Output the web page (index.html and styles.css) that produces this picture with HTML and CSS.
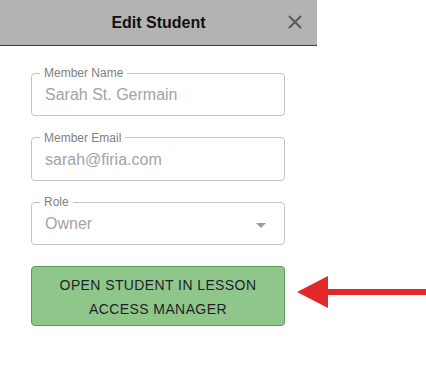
FILE: index.html
```html
<!DOCTYPE html>
<html>
<head>
<meta charset="utf-8">
<link rel="stylesheet" href="styles.css">
</head>
<body>
<div class="panel">
  <div class="header">
    <span class="title">Edit Student</span>
    <span class="close" aria-label="close">
      <svg width="14" height="14" viewBox="0 0 14 14"><path d="M1 1L13 13M13 1L1 13" stroke="#5a5a5a" stroke-width="2" fill="none"/></svg>
    </span>
  </div>
  <div class="content">
    <fieldset class="field">
      <legend>Member Name</legend>
      <div class="value">Sarah St. Germain</div>
    </fieldset>
    <fieldset class="field">
      <legend>Member Email</legend>
      <div class="value">sarah@firia.com</div>
    </fieldset>
    <fieldset class="field">
      <legend>Role</legend>
      <div class="value select">Owner<span class="caret"></span></div>
    </fieldset>
    <button class="open-btn">OPEN STUDENT IN LESSON<br>ACCESS MANAGER</button>
  </div>
</div>
<svg class="arrow" width="131" height="34" viewBox="0 0 131 34">
  <polygon points="2,17 33,1 33,33" fill="#e3282b"/>
  <rect x="32" y="14" width="99" height="6" fill="#e3282b"/>
</svg>
</body>
</html>
```
FILE: styles.css
```css
html, body {
  margin: 0;
  padding: 0;
  background: #fff;
  font-family: "Liberation Sans", Arial, sans-serif;
}
.panel {
  width: 317px;
}
.header {
  height: 45px;
  background: #b3b3b3;
  border-bottom: 1px solid #3c3c3c;
  display: flex;
  align-items: center;
  justify-content: center;
  position: relative;
}
.title {
  font-weight: bold;
  font-size: 16px;
  color: #111;
}
.close {
  position: absolute;
  right: 15px;
  top: 15px;
  width: 14px;
  height: 14px;
  display: block;
}
.close svg { display: block; }
.content {
  padding: 20px 0 0 31px;
  display: flex;
  flex-direction: column;
  gap: 14.5px;
}
.field {
  width: 254px;
  box-sizing: border-box;
  margin: 0;
  padding: 0 13px;
  border: 1px solid #c4c4c4;
  border-radius: 4px;
  height: 50px;
}
.field legend {
  font-size: 12px;
  line-height: 14px;
  color: #808080;
  padding: 0 4px;
  margin-left: -5px;
}
.value {
  font-size: 16px;
  line-height: 20px;
  color: #a3a3a3;
  padding-top: 5px;
  display: flex;
  align-items: center;
}
.select {
  justify-content: space-between;
}
.caret {
  width: 0;
  height: 0;
  border-left: 5px solid transparent;
  border-right: 5px solid transparent;
  border-top: 5px solid #9a9a9a;
  margin-right: 5px;
  margin-top: 3px;
}
.open-btn {
  margin-top: 6.5px;
  width: 254px;
  height: 60px;
  box-sizing: border-box;
  background: #8fc68a;
  border: 1px solid #5e9a59;
  border-radius: 4px;
  font-family: "Liberation Sans", Arial, sans-serif;
  font-size: 14px;
  line-height: 24px;
  letter-spacing: 0.4px;
  color: #1f1f2a;
  padding: 6px 0 5px;
  text-align: center;
}
.arrow {
  position: absolute;
  left: 295px;
  top: 275px;
}
```
